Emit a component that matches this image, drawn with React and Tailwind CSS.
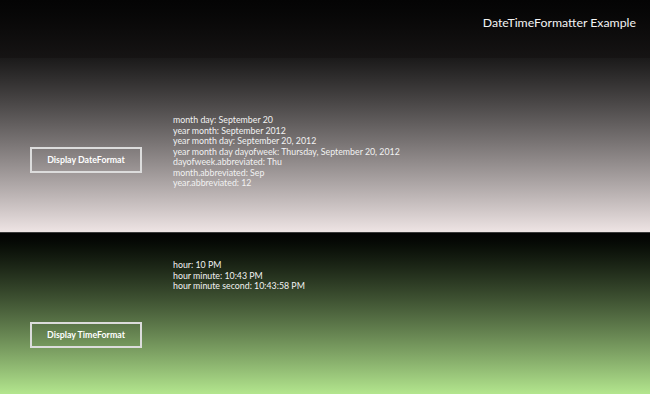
const dateLines = [
  "month day: September 20",
  "year month: September 2012",
  "year month day: September 20, 2012",
  "year month day dayofweek: Thursday, September 20, 2012",
  "dayofweek.abbreviated: Thu",
  "month.abbreviated: Sep",
  "year.abbreviated: 12",
];

const timeLines = [
  "hour: 10 PM",
  "hour minute: 10:43 PM",
  "hour minute second: 10:43:58 PM",
];

const Output = ({ lines, top }) => (
  <div className={`${top} ml-[31px] text-[8.8px] leading-[10.5px] text-[#f2f2f2]`}>
    {lines.map((l) => (
      <div key={l}>{l}</div>
    ))}
  </div>
);

const FormatButton = ({ label }) => (
  <button className="mt-[89px] w-[112px] h-[26px] border-2 border-[#dcdcdc] text-[8.8px] font-bold text-white shrink-0">
    {label}
  </button>
);

export default function App() {
  return (
    <div
      className="w-[650px] h-[394px] overflow-hidden flex flex-col"
      style={{ fontFamily: 'Lato, "Open Sans", sans-serif' }}
    >
      {/* HEADER */}
      <div className="h-[58px] bg-gradient-to-b from-[#040404] to-[#161414] flex justify-end pr-[14px] pt-[13px]">
        <h1 className="text-[12.3px] text-[#f4f4f4] leading-[20px]">DateTimeFormatter Example</h1>
      </div>

      {/* DATE SECTION */}
      <div className="h-[174px] bg-gradient-to-b from-[#1b1a1a] to-[#eee4e4] flex items-start pl-[30px]">
        <FormatButton label="Display DateFormat" />
        <Output lines={dateLines} top="mt-[57px]" />
      </div>

      {/* TIME SECTION */}
      <div className="h-[162px] border-t border-[#3a3a3a] bg-gradient-to-b from-[#020302] to-[#b3e68e] flex items-start pl-[30px]">
        <FormatButton label="Display TimeFormat" />
        <Output lines={timeLines} top="mt-[27px]" />
      </div>
    </div>
  );
}
